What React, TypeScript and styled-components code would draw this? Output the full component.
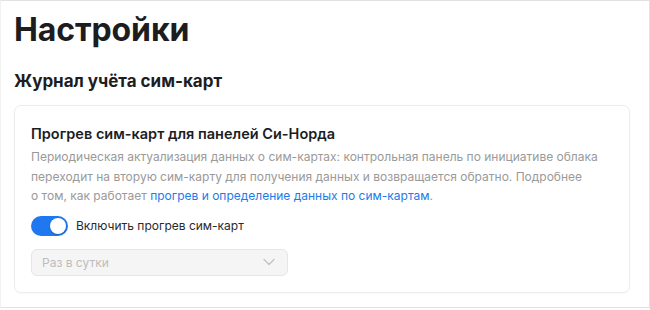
import React, { useState } from "react";
import styled, { createGlobalStyle } from "styled-components";

const Global = createGlobalStyle`
  html, body { margin: 0; padding: 0; background: #ffffff; }
  body { font-family: Inter, "Noto Sans", Arial, sans-serif; -webkit-font-smoothing: antialiased; }
  * { box-sizing: border-box; }
`;

const Frame = styled.div`
  width: 650px;
  height: 308px;
  border: 1px solid #e2e2e2;
  border-left-color: #f2f2f2;
  background: #ffffff;
  padding: 9px 19px 0 13px;
  display: flex;
  flex-direction: column;
  overflow: hidden;
`;

const PageTitle = styled.h1`
  margin: 0;
  font-size: 32px;
  line-height: 40px;
  font-weight: 700;
  color: #1d1d1f;
  letter-spacing: -0.1px;
`;

const SectionTitle = styled.h2`
  margin: 20px 0 0;
  font-size: 17px;
  line-height: 22px;
  font-weight: 700;
  color: #1d1d1f;
`;

const Card = styled.section`
  margin-top: 13px;
  border: 1px solid #ececec;
  border-radius: 7px;
  padding: 18px 16px 16px;
  display: flex;
  flex-direction: column;
  box-shadow: 0 1px 2px rgba(0, 0, 0, 0.03);
`;

const CardTitle = styled.h3`
  margin: 0;
  font-size: 14.5px;
  line-height: 20px;
  font-weight: 600;
  color: #1d1d1f;
`;

const Description = styled.p`
  margin: 3px 0 0;
  font-size: 12px;
  line-height: 19.5px;
  color: #9a9a9a;
  white-space: nowrap;
`;

const Link = styled.a`
  color: #1f7ae8;
  text-decoration: none;
`;

const ToggleRow = styled.label`
  display: flex;
  align-items: center;
  gap: 8px;
  margin-top: 10px;
  font-size: 12px;
  color: #2a2a2a;
  cursor: pointer;
`;

const Track = styled.span<{ $on: boolean }>`
  position: relative;
  width: 37px;
  height: 20px;
  border-radius: 10px;
  background: ${(p) => (p.$on ? "#1f78f0" : "#d6d6d6")};
  flex-shrink: 0;
`;

const Knob = styled.span<{ $on: boolean }>`
  position: absolute;
  top: 2px;
  left: ${(p) => (p.$on ? "19px" : "2px")};
  width: 16px;
  height: 16px;
  border-radius: 50%;
  background: #ffffff;
  box-shadow: 0 1px 2px rgba(0, 0, 0, 0.2);
`;

const Select = styled.div`
  margin-top: 13px;
  width: 257px;
  height: 27px;
  border: 1px solid #e6e6e6;
  border-radius: 6px;
  background: #f5f5f5;
  display: flex;
  align-items: center;
  justify-content: space-between;
  padding: 0 12px 0 10px;
  font-size: 12px;
  color: #bdbdbd;
`;

export default function App() {
  const [on, setOn] = useState(true);
  return (
    <>
      <Global />
      <Frame>
        <PageTitle>Настройки</PageTitle>
        <SectionTitle>Журнал учёта сим-карт</SectionTitle>
        <Card>
          <CardTitle>Прогрев сим-карт для панелей Си-Норда</CardTitle>
          <Description>
            Периодическая актуализация данных о сим-картах: контрольная панель по инициативе облака
            <br />
            переходит на вторую сим-карту для получения данных и возвращается обратно. Подробнее
            <br />
            о том, как работает <Link href="#">прогрев и определение данных по сим-картам</Link>.
          </Description>
          <ToggleRow onClick={() => setOn(!on)}>
            <Track $on={on}>
              <Knob $on={on} />
            </Track>
            Включить прогрев сим-карт
          </ToggleRow>
          <Select>
            <span>Раз в сутки</span>
            <svg width="12" height="8" viewBox="0 0 12 8" fill="none">
              <path d="M1 1.5L6 6.5L11 1.5" stroke="#c4c4c4" strokeWidth="1.4" strokeLinecap="round" strokeLinejoin="round" />
            </svg>
          </Select>
        </Card>
      </Frame>
    </>
  );
}
